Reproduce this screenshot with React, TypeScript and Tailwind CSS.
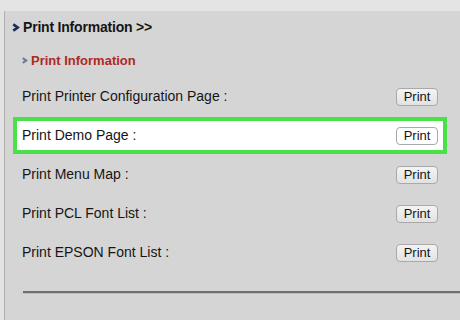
import React from "react";

const Arrow = ({ w, h, color, sw }: { w: number; h: number; color: string; sw: number }) => (
  <svg width={w} height={h} viewBox="0 0 10 10" preserveAspectRatio="none" className="shrink-0">
    <polyline points="2.5,1.5 7.5,5 2.5,8.5" fill="none" stroke={color} strokeWidth={sw} strokeLinejoin="miter" />
  </svg>
);

const rows = [
  "Print Printer Configuration Page :",
  "Print Demo Page :",
  "Print Menu Map :",
  "Print PCL Font List :",
  "Print EPSON Font List :",
];

export default function App() {
  return (
    <div
      className="w-[460px] h-[320px] bg-[#d5d5d5] overflow-hidden flex flex-col text-[#151515]"
      style={{ fontFamily: '"Liberation Sans", Arial, sans-serif' }}
    >
      <div className="h-[11px] bg-[#e4e4e4] shrink-0" />
      <div className="flex flex-1">
        <div className="w-[4px] bg-[#e2e2e2] border-r border-[#b0b0b0] box-content" />
        <div className="flex-1 flex flex-col">
          <div className="h-[32px] flex items-center pl-[6px] gap-[3px]">
            <Arrow w={9} h={9} color="#1b2a58" sw={3} />
            <span className="text-[14px] font-bold tracking-[-0.2px]">Print Information &gt;&gt;</span>
          </div>
          <div className="h-[35px] flex items-center pl-[16px] gap-[3px]">
            <Arrow w={7} h={7} color="#6d7b8c" sw={3} />
            <span className="text-[13px] font-bold text-[#ad2a1f]">Print Information</span>
          </div>
          <div className="flex flex-col gap-[2px]">
            {rows.map((r, i) => {
              const hl = i === 1;
              return (
                <div
                  key={r}
                  className={`ml-[8px] w-[434px] h-[37px] border-4 flex items-center justify-between px-[5px] ${
                    hl ? "border-[#48e148] bg-white" : "border-transparent"
                  }`}
                >
                  <span className="text-[14px]">{r}</span>
                  <button
                    className={`w-[42px] h-[18px] rounded-[4px] border border-[#a9a9a9] text-[13px] leading-none flex items-center justify-center ${
                      hl ? "bg-white" : "bg-gradient-to-b from-[#f4f4f4] to-[#e2e2e2]"
                    }`}
                  >
                    Print
                  </button>
                </div>
              );
            })}
          </div>
          <div className="mt-[20px] ml-[18px] h-[2px] bg-[#6f6f6f] border-b border-[#bdbdbd] box-content" />
        </div>
      </div>
    </div>
  );
}
